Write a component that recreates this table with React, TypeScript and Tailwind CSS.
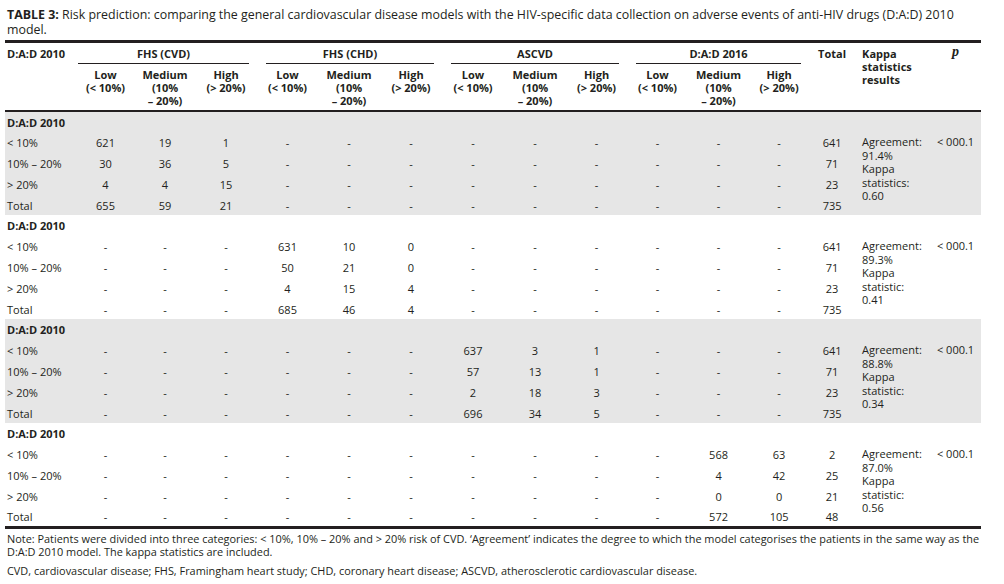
import React from "react";

type Block = { rows: string[][]; kappa: string[]; p: string };

const D = "-";
const labels = ["< 10%", "10% \u2013 20%", "> 20%", "Total"];

const blocks: Block[] = [
  {
    rows: [
      ["621", "19", "1", D, D, D, D, D, D, D, D, D, "641"],
      ["30", "36", "5", D, D, D, D, D, D, D, D, D, "71"],
      ["4", "4", "15", D, D, D, D, D, D, D, D, D, "23"],
      ["655", "59", "21", D, D, D, D, D, D, D, D, D, "735"],
    ],
    kappa: ["Agreement:", "91.4%", "Kappa", "statistics:", "0.60"],
    p: "< 000.1",
  },
  {
    rows: [
      [D, D, D, "631", "10", "0", D, D, D, D, D, D, "641"],
      [D, D, D, "50", "21", "0", D, D, D, D, D, D, "71"],
      [D, D, D, "4", "15", "4", D, D, D, D, D, D, "23"],
      [D, D, D, "685", "46", "4", D, D, D, D, D, D, "735"],
    ],
    kappa: ["Agreement:", "89.3%", "Kappa", "statistic:", "0.41"],
    p: "< 000.1",
  },
  {
    rows: [
      [D, D, D, D, D, D, "637", "3", "1", D, D, D, "641"],
      [D, D, D, D, D, D, "57", "13", "1", D, D, D, "71"],
      [D, D, D, D, D, D, "2", "18", "3", D, D, D, "23"],
      [D, D, D, D, D, D, "696", "34", "5", D, D, D, "735"],
    ],
    kappa: ["Agreement:", "88.8%", "Kappa", "statistic:", "0.34"],
    p: "< 000.1",
  },
  {
    rows: [
      [D, D, D, D, D, D, D, D, D, D, "568", "63", "2"],
      [D, D, D, D, D, D, D, D, D, D, "4", "42", "25"],
      [D, D, D, D, D, D, D, D, D, D, "0", "0", "21"],
      [D, D, D, D, D, D, D, D, D, D, "572", "105", "48"],
    ],
    kappa: ["Agreement:", "87.0%", "Kappa", "statistic:", "0.56"],
    p: "< 000.1",
  },
];

const colWidths = [71, 59, 60, 62, 61, 62, 62, 62, 62, 61, 61, 61, 60, 46, 75, 51];

const groups = ["FHS (CVD)", "FHS (CHD)", "ASCVD", "D:A:D 2016"];

function SubHeads() {
  return (
    <>
      <th className="p-0 pt-[4px] pb-[3px] align-top font-bold leading-[13px]">
        Low
        <br />
        (&lt; 10%)
      </th>
      <th className="p-0 pt-[4px] pb-[3px] align-top font-bold leading-[13px]">
        Medium
        <br />
        (10%
        <br />
        {"\u2013 20%)"}
      </th>
      <th className="p-0 pt-[4px] pb-[3px] align-top font-bold leading-[13px]">
        High
        <br />
        (&gt; 20%)
      </th>
    </>
  );
}

export default function App() {
  return (
    <div
      className="w-[1004px] h-[584px] bg-white text-[#231f20] overflow-hidden"
      style={{ fontFamily: '"Open Sans", "Noto Sans", sans-serif' }}
    >
      <div className="pl-[7px] pt-[7px] text-[12.4px] leading-[15px] whitespace-nowrap">
        <div>
          <span className="font-bold">TABLE 3:</span> Risk prediction: comparing the general cardiovascular disease
          models with the HIV-specific data collection on adverse events of anti-HIV drugs (D:A:D) 2010
        </div>
        <div>model.</div>
      </div>

      <table className="table-fixed border-collapse w-[976px] ml-[5px] mt-[3px] text-[11px]">
        <colgroup>
          {colWidths.map((w, i) => (
            <col key={i} style={{ width: w }} />
          ))}
        </colgroup>
        <thead className="border-t-[3px] border-b-2 border-[#231f20]">
          <tr>
            <th rowSpan={2} className="p-0 pl-[2px] pt-[4px] align-top text-left font-bold leading-[13px]">
              D:A:D 2010
            </th>
            {groups.map((g, i) => (
              <th key={g} colSpan={3} className="p-0 pt-[4px] align-top font-bold leading-[13px]">
                <div
                  className={
                    "border-b border-[#231f20] pb-[3px] " + (i === 0 ? "ml-[2px] mr-[8px]" : "ml-[9px] mr-[8px]")
                  }
                >
                  {g}
                </div>
              </th>
            ))}
            <th rowSpan={2} className="p-0 pt-[4px] align-top font-bold leading-[13px]">
              Total
            </th>
            <th rowSpan={2} className="p-0 pl-[7px] pt-[4px] align-top text-left font-bold leading-[13px]">
              Kappa
              <br />
              statistics
              <br />
              results
            </th>
            <th
              rowSpan={2}
              className="p-0 pt-[1px] align-top font-bold italic text-[14px] leading-[15px]"
              style={{ fontFamily: '"Liberation Serif", serif' }}
            >
              p
            </th>
          </tr>
          <tr>
            <SubHeads />
            <SubHeads />
            <SubHeads />
            <SubHeads />
          </tr>
        </thead>
        {blocks.map((b, bi) => (
          <tbody
            key={bi}
            className={(bi % 2 === 0 ? "bg-[#e6e6e6] " : "bg-white ") + (bi === 3 ? "border-b-[3px] border-[#231f20]" : "")}
          >
            <tr className="h-[21px]">
              <td className="p-0 pl-[2px] font-bold leading-[13px]">D:A:D 2010</td>
              <td colSpan={15} className="p-0"></td>
            </tr>
            {b.rows.map((r, ri) => (
              <tr key={ri} className={ri === 3 ? "h-[20px]" : "h-[21px]"}>
                <td className="p-0 pl-[2px] leading-[13px] whitespace-nowrap">{labels[ri]}</td>
                {r.map((v, ci) => (
                  <td key={ci} className="p-0 text-center leading-[13px]">
                    {v}
                  </td>
                ))}
                {ri === 0 && (
                  <>
                    <td rowSpan={4} className="p-0 pl-[7px] pt-[3px] align-top leading-[13.5px]">
                      {b.kappa.map((k) => (
                        <div key={k} className="whitespace-nowrap">
                          {k}
                        </div>
                      ))}
                    </td>
                    <td rowSpan={4} className="p-0 pt-[3px] align-top text-center leading-[13.5px] whitespace-nowrap">
                      {b.p}
                    </td>
                  </>
                )}
              </tr>
            ))}
          </tbody>
        ))}
      </table>

      <div className="pl-[7px] pt-[3px] text-[10.92px] leading-[13px] whitespace-nowrap">
        <div>
          Note: Patients were divided into three categories: &lt; 10%, 10% {"\u2013"} 20% and &gt; 20% risk of CVD.
          {" \u2018Agreement\u2019"} indicates the degree to which the model categorises the patients in the same way
          as the
        </div>
        <div>D:A:D 2010 model. The kappa statistics are included.</div>
        <div className="mt-[6px]">
          CVD, cardiovascular disease; FHS, Framingham heart study; CHD, coronary heart disease; ASCVD,
          atherosclerotic cardiovascular disease.
        </div>
      </div>
    </div>
  );
}
